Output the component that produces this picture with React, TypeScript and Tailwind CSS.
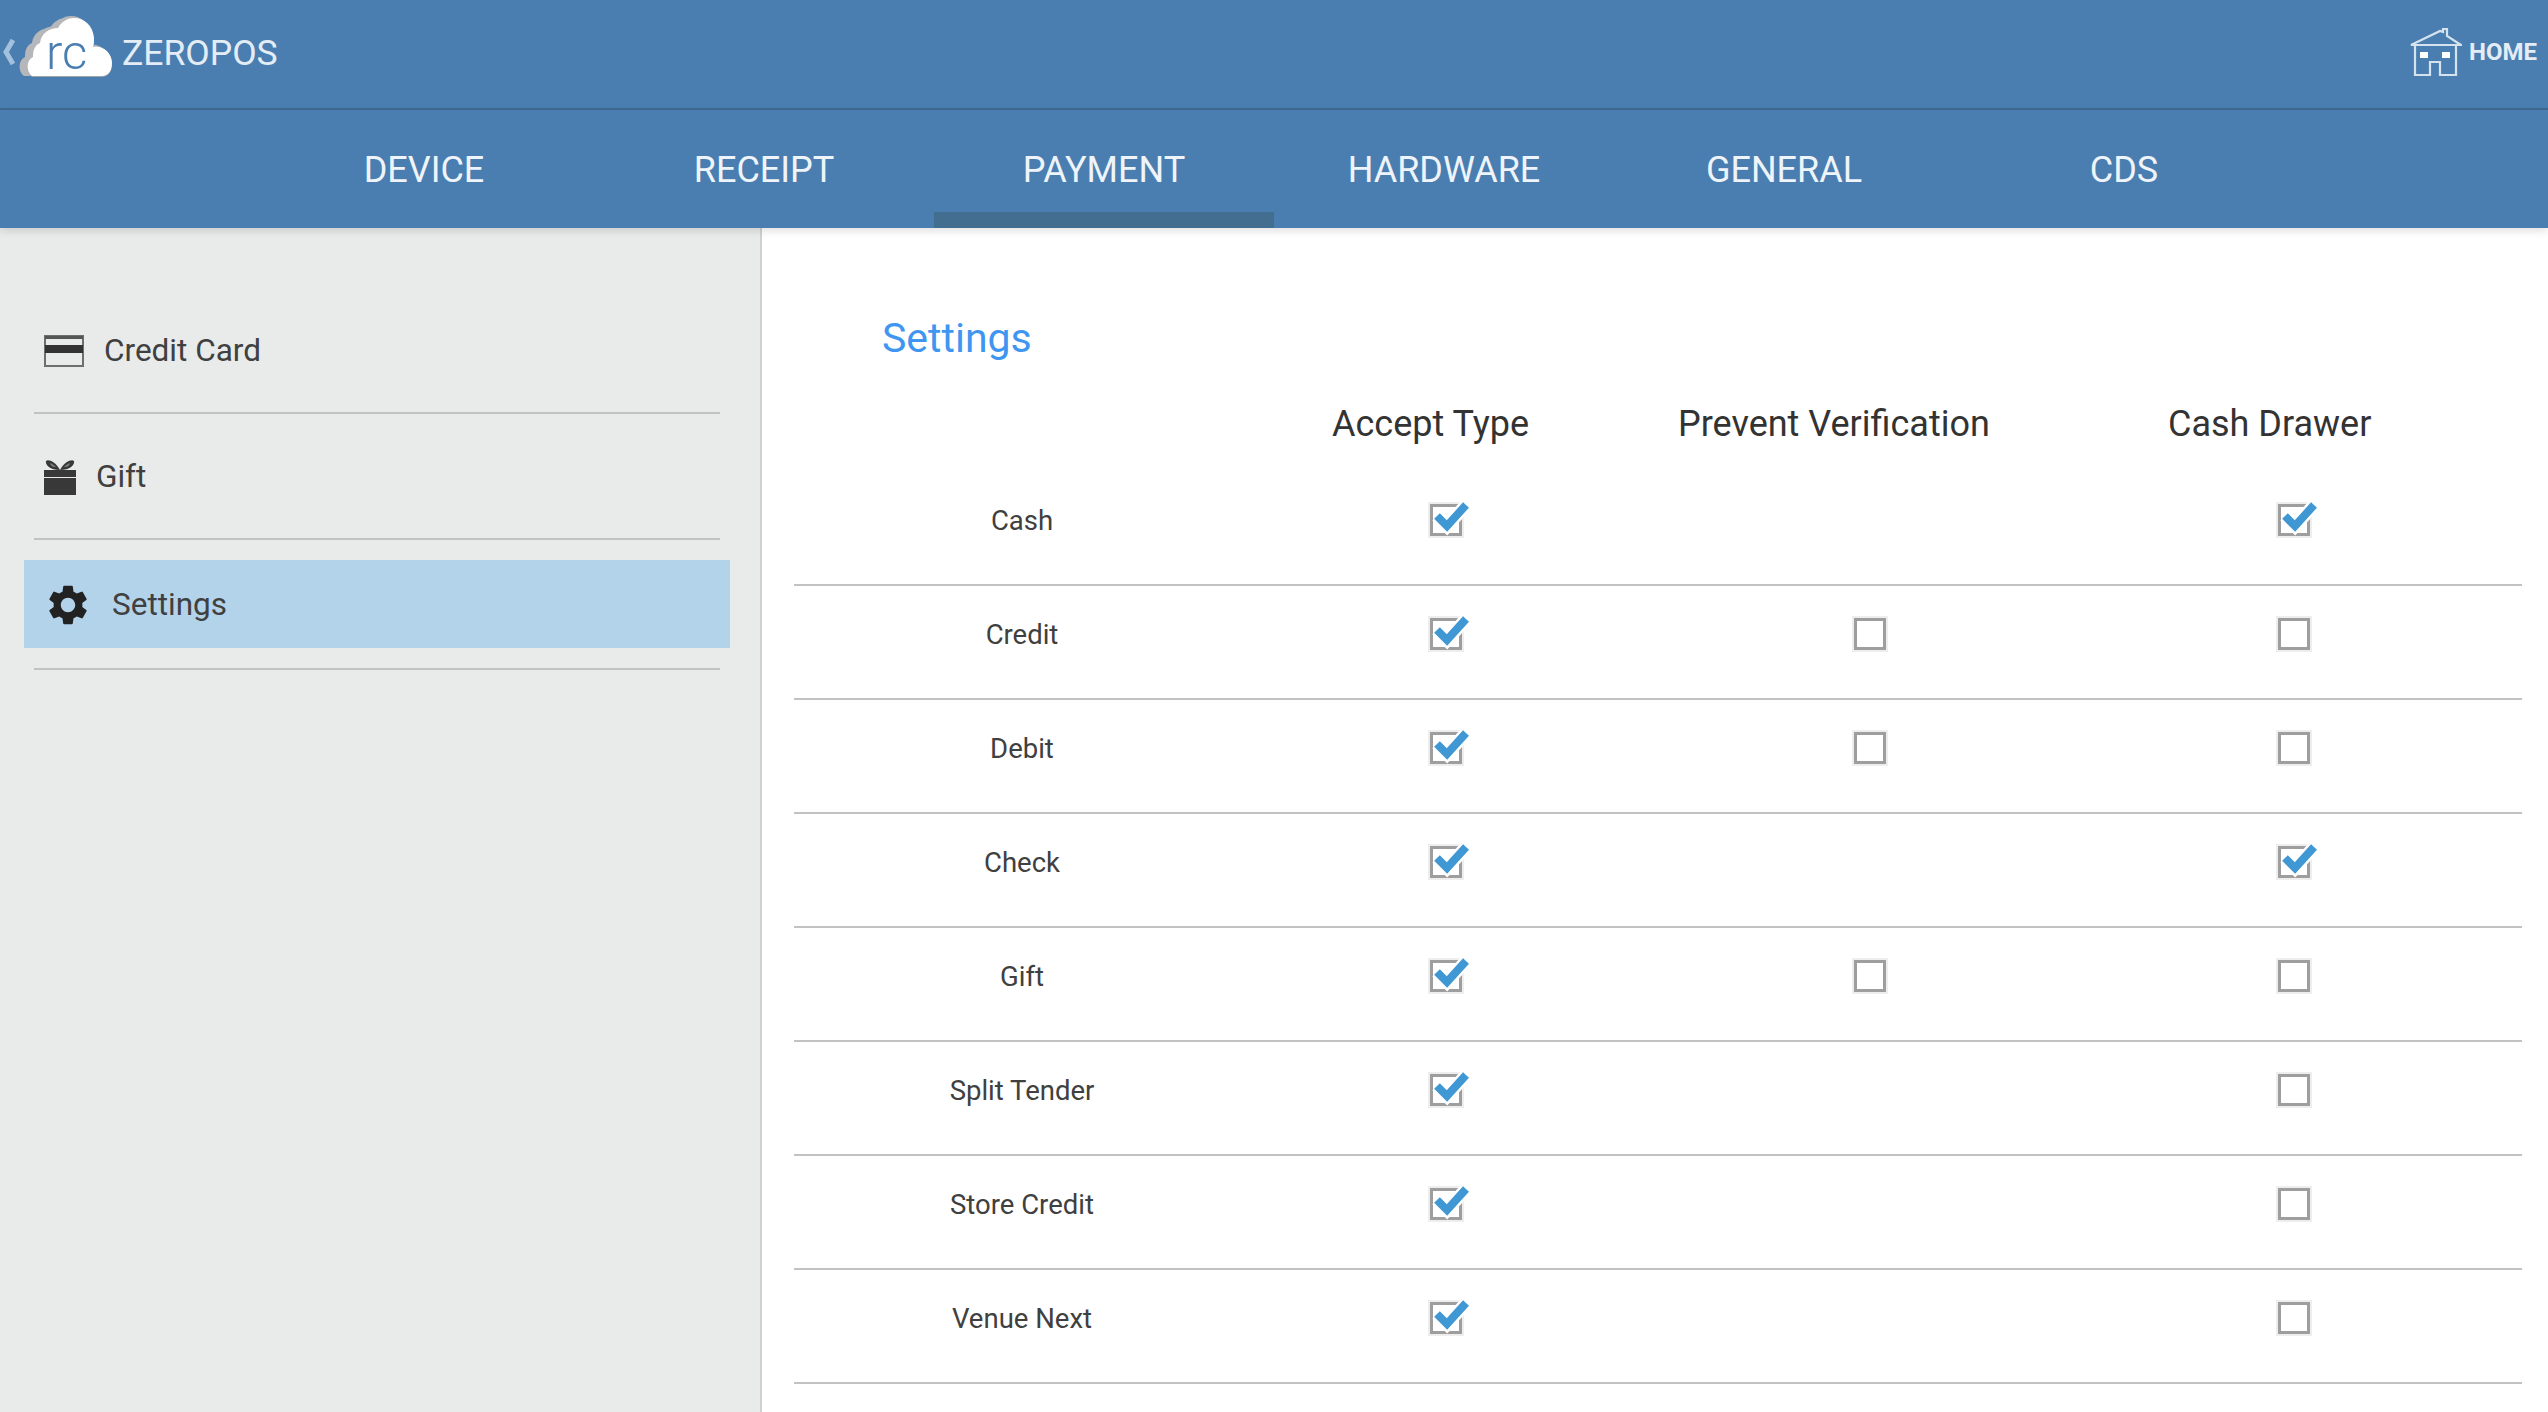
import { MdSettings } from 'react-icons/md'

const tabs = ['DEVICE', 'RECEIPT', 'PAYMENT', 'HARDWARE', 'GENERAL', 'CDS']

// null means the row has no checkbox in that column
const rows: { label: string; accept: boolean; prevent: boolean | null; drawer: boolean }[] = [
	{ label: 'Cash', accept: true, prevent: null, drawer: true },
	{ label: 'Credit', accept: true, prevent: false, drawer: false },
	{ label: 'Debit', accept: true, prevent: false, drawer: false },
	{ label: 'Check', accept: true, prevent: null, drawer: true },
	{ label: 'Gift', accept: true, prevent: false, drawer: false },
	{ label: 'Split Tender', accept: true, prevent: null, drawer: false },
	{ label: 'Store Credit', accept: true, prevent: null, drawer: false },
	{ label: 'Venue Next', accept: true, prevent: null, drawer: false },
]

const cloud =
	'M10 60C4 56 4 44 11 41C11 32 14 29 18 27C19 17 28 12 36 12C40 5 46 2 52 2C62 2 71 9 72 22C72 25 72 28 71 31C80 29 90 36 90 47C90 55 86 60 80 60Z'

function Logo() {
	return (
		<svg width="92" height="64" viewBox="0 0 92 64" className="shrink-0 -mt-[8px] overflow-visible">
			<path d={cloud} fill="#b5b7ba" transform="translate(-8 0)" />
			<path d={cloud} fill="#b5b7ba" transform="translate(-3 -2)" />
			<path d={cloud} fill="#9ea3a8" transform="translate(0 1)" />
			<path d={cloud} fill="#ffffff" />
			<text x="24" y="53" fill="#4a7eb0" fontSize="49" fontWeight="300" fontFamily="Roboto, sans-serif">
				rc
			</text>
		</svg>
	)
}

function Chevron() {
	return (
		<svg width="22" height="28" viewBox="0 0 22 28" fill="none" className="shrink-0">
			<path d="M13 2 L6 14 L13 26" stroke="#a3c1dc" strokeWidth="5" />
		</svg>
	)
}

function HomeIcon() {
	return (
		<svg width="52" height="48" viewBox="0 0 52 48" fill="none" stroke="#d5e3ef" strokeWidth="2.2" className="shrink-0">
			<path d="M1 17 L30 3 L33 4 L33 1 L37 1 L37 8 L51 17 Z" />
			<path d="M5 17 V47 H20 V34 H30 V47 H46 V17" />
			<rect x="10" y="24" width="8" height="6" fill="#ffffff" stroke="none" />
			<rect x="32" y="24" width="8" height="6" fill="#ffffff" stroke="none" />
		</svg>
	)
}

function CardIcon() {
	return (
		<svg width="40" height="32" viewBox="0 0 40 32" className="shrink-0">
			<rect x="1" y="1" width="38" height="30" fill="none" stroke="#6e6e6e" strokeWidth="2" />
			<rect x="1" y="10" width="38" height="8" fill="#333333" />
			<rect x="1" y="1" width="38" height="3" fill="#555555" />
		</svg>
	)
}

function GiftIcon() {
	return (
		<svg width="32" height="36" viewBox="0 0 32 36" className="shrink-0">
			<rect x="0" y="19" width="32" height="17" fill="#383838" />
			<rect x="0" y="11" width="32" height="7" fill="#383838" />
			<path d="M16 11C11 2 4 0 2 2c-1 4 4 9 14 9zM16 11c5-9 12-11 14-9 1 4-4 9-14 9z" fill="#383838" />
			<path d="M6 4c2 1 4 2 6 4-3 0-5-1-6-4zM26 4c-2 1-4 2-6 4 3 0 5-1 6-4z" fill="#8a8a8a" />
		</svg>
	)
}

function Checkbox({ checked }: { checked: boolean }) {
	return (
		<div className="relative -mt-[2px] w-[32px] h-[32px] border-[3px] border-[#9e9e9e] shadow-[0_0_0_2px_#eeeeee]">
			{checked && (
				<svg width="40" height="36" viewBox="0 0 40 36" fill="none" className="absolute left-[-1px] top-[-7px]">
					<path d="M5 16 L15 26 L34 5" stroke="#ffffff" strokeWidth="13" />
					<path d="M5 16 L15 26 L34 5" stroke="#3f97d3" strokeWidth="8" />
				</svg>
			)}
		</div>
	)
}

export default function App() {
	return (
		<div className="w-[2548px] h-[1412px] overflow-hidden flex flex-col bg-white font-['Roboto',sans-serif] text-[#404040]">
			{/* Top bar */}
			<div className="h-[110px] shrink-0 flex items-center bg-[#4a7eb0] border-b-[2px] border-[#3d6a92] pb-[4px] z-10 shadow-[0_2px_4px_rgba(0,0,0,0.12)]">
				<Chevron />
				<Logo />
				<span className="ml-[8px] mt-[3px] text-[35.5px] leading-none text-[#e4edf5]">ZEROPOS</span>
				<div className="ml-auto flex items-center pr-[11px]">
					<HomeIcon />
					<span className="ml-[7px] text-[24px] font-bold text-[#e4edf5]">HOME</span>
				</div>
			</div>

			{/* Tabs */}
			<div className="h-[118px] shrink-0 flex justify-center bg-[#4a7eb0] z-10 shadow-[0_3px_8px_rgba(0,0,0,0.12)]">
				{tabs.map((tab) => (
					<div
						key={tab}
						className={`w-[340px] flex items-center justify-center pt-[18px] text-[36px] text-[#eef4f9] border-b-[16px] ${
							tab === 'PAYMENT' ? 'border-[#436e8f]' : 'border-transparent'
						}`}
					>
						{tab}
					</div>
				))}
			</div>

			<div className="flex-1 flex min-h-0">
				{/* Sidebar */}
				<div className="w-[762px] shrink-0 bg-[#e9ebea] border-r-[2px] border-[#d0d0d0] pt-[60px] pl-[34px] pr-[40px] text-[31.5px]">
					<div className="h-[126px] flex items-center border-b-[2px] border-[#c2c2c2] pt-[1px]">
						<div className="ml-[10px]">
							<CardIcon />
						</div>
						<span className="ml-[20px]">Credit Card</span>
					</div>
					<div className="h-[126px] flex items-center border-b-[2px] border-[#c2c2c2] pt-[2px]">
						<div className="ml-[10px]">
							<GiftIcon />
						</div>
						<span className="ml-[20px]">Gift</span>
					</div>
					<div className="pt-[20px] pb-[20px] border-b-[2px] border-[#c2c2c2]">
						<div className="-mx-[10px] h-[88px] flex items-center bg-[#b3d3eb] pt-[2px]">
							<MdSettings size={48} className="ml-[20px] shrink-0 text-[#222222]" />
							<span className="ml-[20px]">Settings</span>
						</div>
					</div>
				</div>

				{/* Settings table */}
				<div className="flex-1 pl-[32px] pr-[26px] pt-[86px]">
					<h2 className="pl-[88px] text-[41px] leading-[48px] text-[#3f96f0]">Settings</h2>
					<div className="mt-[38px] mb-[24px] grid grid-cols-[538px_346px_490px_1fr] text-[36px] leading-[48px] text-[#333333]">
						<div className="col-start-2">Accept Type</div>
						<div>Prevent Verification</div>
						<div>Cash Drawer</div>
					</div>
					{rows.map((row) => (
						<div
							key={row.label}
							className="h-[114px] grid grid-cols-[456px_392px_456px_392px] items-center pb-[14px] border-b-[2px] border-[#c2c2c2] text-[27.5px]"
						>
							<div className="text-center">{row.label}</div>
							<div className="flex justify-center">
								<Checkbox checked={row.accept} />
							</div>
							<div className="flex justify-center">
								{row.prevent !== null && <Checkbox checked={row.prevent} />}
							</div>
							<div className="flex justify-center">
								<Checkbox checked={row.drawer} />
							</div>
						</div>
					))}
				</div>
			</div>
		</div>
	)
}
